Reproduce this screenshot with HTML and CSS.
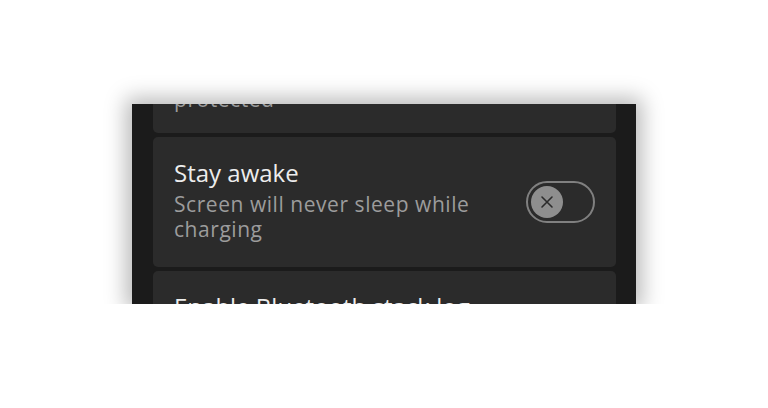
FILE: index.html
```html
<!DOCTYPE html>
<html>
<head>
<meta charset="utf-8">
<link rel="stylesheet" href="styles.css">
</head>
<body>
<div class="panel">
  <div class="list">
    <div class="card card-top">
      <div class="text">
        <div class="title">Allow apps to be</div>
        <div class="sub">protected</div>
      </div>
    </div>
    <div class="card">
      <div class="text">
        <div class="title">Stay awake</div>
        <div class="sub">Screen will never sleep while<br>charging</div>
      </div>
      <div class="switch">
        <div class="thumb">
          <svg width="14" height="14" viewBox="0 0 14 14"><path d="M2 2L12 12M12 2L2 12" stroke="#2b2b2b" stroke-width="1.6" stroke-linecap="round"/></svg>
        </div>
      </div>
    </div>
    <div class="card">
      <div class="text">
        <div class="title">Enable Bluetooth stack log</div>
        <div class="sub">Store Bluetooth stack packets</div>
      </div>
    </div>
  </div>
</div>
</body>
</html>
```
FILE: styles.css
```css
html, body {
  margin: 0;
  padding: 0;
  background: #ffffff;
}
body {
  padding: 104px 0 0 132px;
  font-family: "Open Sans", "Noto Sans", sans-serif;
}
.panel {
  width: 504px;
  height: 200px;
  background: #1b1b1b;
  overflow: hidden;
  box-shadow: 0 0 20px 6px rgba(0,0,0,0.28);
}
.list {
  display: flex;
  flex-direction: column;
  gap: 4px;
  padding: 0 20px 0 21px;
  margin-top: -51px;
}
.card {
  background: #2b2b2b;
  border-radius: 5px;
  height: 130px;
  box-sizing: border-box;
  padding: 21px 21px 0 21px;
  display: flex;
  align-items: flex-start;
  justify-content: space-between;
  flex-shrink: 0;
}
.card-top {
  height: 80px;
  align-items: flex-end;
  padding: 0 21px 21px 21px;
}
.text {
  display: flex;
  flex-direction: column;
}
.title {
  color: #ededed;
  font-size: 24px;
  font-weight: 500;
  line-height: 30px;
}
.sub {
  color: #9c9c9c;
  font-size: 21px;
  letter-spacing: 0.55px;
  line-height: 25px;
  margin-top: 4px;
}
.switch {
  width: 69px;
  height: 42px;
  box-sizing: border-box;
  border: 2px solid #808080;
  border-radius: 21px;
  display: flex;
  align-items: center;
  padding-left: 3px;
  margin-top: 23px;
}
.thumb {
  width: 32px;
  height: 32px;
  border-radius: 50%;
  background: #8e8e8e;
  display: flex;
  align-items: center;
  justify-content: center;
}
```
